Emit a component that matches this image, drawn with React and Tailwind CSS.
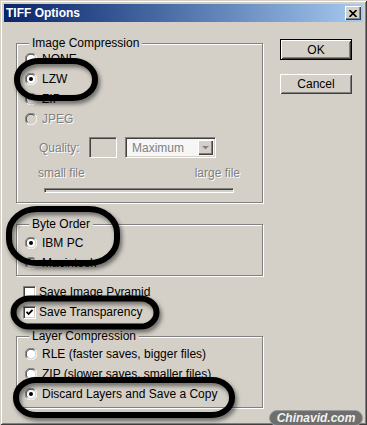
import React from "react";

function Radio({ checked, disabled }) {
  return (
    <svg width="12" height="12" viewBox="0 0 12 12" className="shrink-0">
      <circle cx="6" cy="6" r="5" fill={disabled ? "#d4d0c8" : "#fff"} />
      <path d="M10.2 1.8 A5.9 5.9 0 0 0 1.8 10.2" stroke="#808080" strokeWidth="1" fill="none" />
      <path d="M1.8 10.2 A5.9 5.9 0 0 0 10.2 1.8" stroke="#fff" strokeWidth="1" fill="none" />
      <path d="M9.4 2.6 A4.8 4.8 0 0 0 2.6 9.4" stroke="#404040" strokeWidth="1" fill="none" />
      <path d="M2.6 9.4 A4.8 4.8 0 0 0 9.4 2.6" stroke="#d4d0c8" strokeWidth="1" fill="none" />
      {checked && <circle cx="6" cy="6" r="2" fill="#000" />}
    </svg>
  );
}

function RadioRow({ label, checked, disabled }) {
  return (
    <div className="flex items-center h-[20px] gap-[5px]">
      <Radio checked={checked} disabled={disabled} />
      <span
        className={
          disabled
            ? "text-[#808080] [text-shadow:1px_1px_0_#fff] whitespace-nowrap"
            : "text-black whitespace-nowrap"
        }
      >
        {label}
      </span>
    </div>
  );
}

function CheckRow({ label, checked }) {
  return (
    <div className="flex items-center h-[20px] gap-[3px]">
      <span className="w-[13px] h-[13px] shrink-0 bg-white border border-t-[#808080] border-l-[#808080] border-r-white border-b-white shadow-[inset_1px_1px_0_#404040,inset_-1px_-1px_0_#d4d0c8] flex items-center justify-center">
        {checked && (
          <svg width="7" height="7" viewBox="0 0 7 7">
            <polyline points="0.5,2.8 2.6,5 6.6,1" fill="none" stroke="#000" strokeWidth="1.8" />
          </svg>
        )}
      </span>
      <span className="whitespace-nowrap">{label}</span>
    </div>
  );
}

function Group({ title, className, children }) {
  return (
    <fieldset
      className={
        "w-[247px] border border-[#808080] shadow-[inset_1px_1px_0_#fff,1px_1px_0_#fff] " +
        (className || "")
      }
    >
      <legend className="ml-[12px] px-[3px] leading-[12px] bg-[#d4d0c8] whitespace-nowrap">
        {title}
      </legend>
      {children}
    </fieldset>
  );
}

function Button({ children, isDefault, className }) {
  return (
    <div
      className={
        "w-[72px] flex " +
        (isDefault ? "border border-black h-[21px] " : "h-[20px] ") +
        (className || "")
      }
    >
      <div className="flex-1 flex items-center justify-center shadow-[inset_1px_1px_0_#fff,inset_-1px_-1px_0_#404040,inset_2px_2px_0_#d4d0c8,inset_-2px_-2px_0_#808080]">
        {children}
      </div>
    </div>
  );
}

export default function App() {
  return (
    <div className="relative w-[367px] h-[425px] overflow-hidden bg-[#d4d0c8] pt-[4px] px-[4px] font-['Liberation_Sans',Arial,sans-serif] text-[12px] text-black shadow-[inset_1px_1px_0_#d4d0c8,inset_-1px_-1px_0_#404040,inset_2px_2px_0_#fff,inset_-2px_-2px_0_#808080]">
      {/* Title bar */}
      <div className="h-[18px] flex items-center justify-between pl-[2px] pr-[2px] bg-gradient-to-r from-[#0a246a] to-[#a6caf0]">
        <span className="text-white font-bold text-[12px] leading-none">TIFF Options</span>
        <div className="w-[16px] h-[14px] flex items-center justify-center bg-[#d4d0c8] shadow-[inset_1px_1px_0_#fff,inset_-1px_-1px_0_#404040,inset_-2px_-2px_0_#808080]">
          <svg width="8" height="7" viewBox="0 0 8 7">
            <path d="M0.5 0 L7.5 7 M7.5 0 L0.5 7" stroke="#000" strokeWidth="1.6" />
          </svg>
        </div>
      </div>

      {/* Body */}
      <div className="flex">
        <div className="ml-[12px] w-[247px] flex flex-col">
          <Group title="Image Compression" className="mt-[15px] pb-[9px]">
            <div className="pl-[8px] flex flex-col">
              <RadioRow label="NONE" />
              <RadioRow label="LZW" checked />
              <RadioRow label="ZIP" />
              <RadioRow label="JPEG" disabled />
            </div>
            <div className="mt-[8px] h-[21px] pl-[22px] flex items-center">
              <span className="text-[#808080] [text-shadow:1px_1px_0_#fff] w-[50px]">Quality:</span>
              <div className="w-[28px] h-[21px] border border-t-[#808080] border-l-[#808080] border-r-white border-b-white shadow-[inset_1px_1px_0_#404040,inset_-1px_-1px_0_#d4d0c8]" />
              <div className="ml-[8px] w-[91px] h-[21px] flex items-center border border-t-[#808080] border-l-[#808080] border-r-white border-b-white shadow-[inset_1px_1px_0_#404040,inset_-1px_-1px_0_#d4d0c8] bg-[#f6f6f6] pl-[6px] pr-[2px]">
                <span className="flex-1 text-[#808080]">Maximum</span>
                <div className="w-[15px] h-[15px] flex items-center justify-center bg-[#d4d0c8] shadow-[inset_1px_1px_0_#fff,inset_-1px_-1px_0_#404040,inset_-2px_-2px_0_#808080]">
                  <svg width="7" height="4" viewBox="0 0 7 4">
                    <path d="M1 1 L6 1 L3.5 3.6 Z" fill="#fff" />
                    <path d="M0 0 L7 0 L3.5 3.5 Z" fill="#808080" />
                  </svg>
                </div>
              </div>
            </div>
            <div className="mt-[8px] h-[14px] pl-[21px] pr-[22px] flex justify-between leading-[14px] text-[#808080] [text-shadow:1px_1px_0_#fff]">
              <span>small file</span>
              <span>large file</span>
            </div>
            <div className="mt-[8px] ml-[27px] w-[190px] h-[5px] border border-t-[#808080] border-l-[#808080] border-r-white border-b-white shadow-[inset_1px_1px_0_#404040] bg-[#d4d0c8]" />
          </Group>

          <Group title="Byte Order" className="mt-[15px] pt-[3px] pb-[2px]">
            <div className="pl-[8px] flex flex-col">
              <RadioRow label="IBM PC" checked />
              <RadioRow label="Macintosh" />
            </div>
          </Group>

          <div className="mt-[6px] pl-[7px] flex flex-col">
            <CheckRow label="Save Image Pyramid" />
            <CheckRow label="Save Transparency" checked />
          </div>

          <Group title="Layer Compression" className="mt-[8px] pt-[2px] pb-[3px]">
            <div className="pl-[8px] flex flex-col">
              <RadioRow label="RLE (faster saves, bigger files)" />
              <RadioRow label="ZIP (slower saves, smaller files)" />
              <RadioRow label="Discard Layers and Save a Copy" checked />
            </div>
          </Group>
        </div>

        <div className="ml-[17px] mt-[17px] flex flex-col">
          <Button isDefault>OK</Button>
          <Button className="mt-[14px]">Cancel</Button>
        </div>
      </div>

      {/* Hand-drawn annotation marks */}
      <svg
        className="absolute left-0 top-0 pointer-events-none drop-shadow-[2px_3px_2px_rgba(0,0,0,0.5)]"
        width="367"
        height="425"
        viewBox="0 0 367 425"
      >
        <g fill="none" stroke="#000" strokeWidth="6">
          <rect x="17" y="61" width="78" height="37" rx="22" ry="18" />
          <rect x="9" y="209" width="108" height="54" rx="28" ry="24" />
          <rect x="13.5" y="298.5" width="143" height="28" rx="16" ry="14" />
          <rect x="16" y="380" width="216" height="35" rx="20" ry="17" />
        </g>
      </svg>

      {/* Watermark */}
      <div className="absolute right-[4px] bottom-[-1px] w-[94px] h-[16px] rounded-[8px] bg-[#6e6e6e] border border-[#9a9a9a] flex items-center justify-center">
        <span className="text-[#f2f2f2] font-bold italic text-[12px] leading-none">Chinavid.com</span>
      </div>
    </div>
  );
}
